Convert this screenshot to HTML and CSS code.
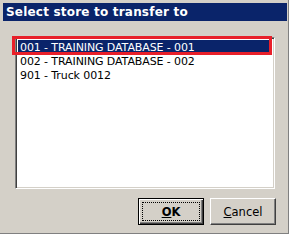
FILE: index.html
```html
<!DOCTYPE html>
<html>
<head>
<meta charset="utf-8">
<link rel="stylesheet" href="styles.css">
</head>
<body>
<div class="window">
  <div class="titlebar">Select store to transfer to</div>
  <div class="listbox">
    <div class="item selected">001 - TRAINING DATABASE - 001</div>
    <div class="item">002 - TRAINING DATABASE - 002</div>
    <div class="item">901 - Truck 0012</div>
    <div class="annot"></div>
  </div>
  <div class="buttons">
    <div class="btn default"><span class="focus"><span class="bold"><u>O</u>K</span></span></div>
    <div class="btn"><span class="focus plain"><u>C</u>ancel</span></div>
  </div>
</div>
</body>
</html>
```

FILE: styles.css
```css
html, body {
  margin: 0;
  padding: 0;
  background: #ffffff;
}
body {
  font-family: "DejaVu Sans", "Liberation Sans", sans-serif;
  font-size: 11px;
}
.window {
  box-sizing: border-box;
  width: 289px;
  height: 234px;
  background: #d4d0c8;
  border-right: 1px solid #808080;
  border-bottom: 1px solid #808080;
  padding-top: 3px;
  display: flex;
  flex-direction: column;
}
.titlebar {
  margin: 0 1px 0 3px;
  height: 18px;
  background: #0a246a;
  color: #ffffff;
  font-weight: bold;
  font-size: 12px;
  line-height: 18px;
  padding-left: 3px;
  letter-spacing: 0.2px;
}
.listbox {
  position: relative;
  box-sizing: border-box;
  margin: 16px 0 0 15px;
  width: 260px;
  height: 152px;
  background: #ffffff;
  border-top: 1px solid #808080;
  border-left: 1px solid #808080;
  border-right: 1px solid #ffffff;
  border-bottom: 1px solid #ffffff;
  box-shadow: inset 1px 1px 0 #404040, inset -1px -1px 0 #d4d0c8;
  padding: 2px 4px 2px 2px;
}
.item {
  height: 14px;
  line-height: 15px;
  padding-left: 2px;
  color: #000000;
  white-space: nowrap;
  letter-spacing: -0.1px;
}
.item.selected {
  background: #0a246a;
  color: #ffffff;
}
.annot {
  position: absolute;
  left: -4px;
  top: -2px;
  width: 260px;
  height: 19px;
  box-sizing: border-box;
  border: 3px solid #e8202a;
}
.buttons {
  display: flex;
  justify-content: flex-end;
  gap: 6px;
  margin: 9px 12px 0 0;
}
.btn {
  box-sizing: border-box;
  width: 66px;
  height: 27px;
  background: #d4d0c8;
  border-top: 1px solid #ffffff;
  border-left: 1px solid #ffffff;
  border-right: 1px solid #404040;
  border-bottom: 1px solid #404040;
  box-shadow: inset -1px -1px 0 #808080;
  display: flex;
  padding: 3px;
  font-size: 11.5px;
}
.btn.default {
  border: 1px solid #000000;
  box-shadow: inset 1px 1px 0 #ffffff, inset -1px -1px 0 #404040, inset -2px -2px 0 #808080;
}
.focus {
  flex: 1;
  display: flex;
  align-items: center;
  justify-content: center;
  border: 1px dotted #000000;
  color: #000000;
}
.focus.plain {
  border-color: transparent;
}
.bold {
  font-weight: bold;
}
```
